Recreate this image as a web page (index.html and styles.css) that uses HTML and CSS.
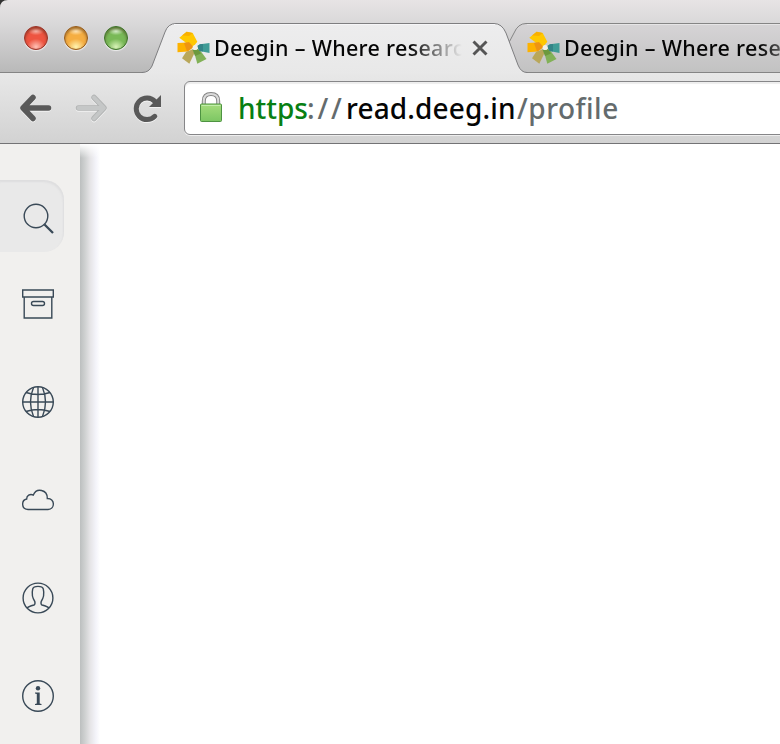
FILE: index.html
```html
<!DOCTYPE html>
<html lang="en">
<head>
<meta charset="utf-8">
<title>Deegin – Where research</title>
<link rel="stylesheet" href="styles.css">
</head>
<body>
<svg class="defs" width="0" height="0" aria-hidden="true">
  <defs>
    <symbol id="logo" viewBox="0 0 34 34">
      <path d="M2.300 6.700 9.700 .7 15.700 2 20.300 10.700 16.500 15.500 10.300 12.700Z" fill="#ffc800"/>
      <path d="M5 4.500 9.700 .7 15.700 2 12 5Z" fill="#f9b000"/>
      <path d="M.5 12 10 11.500 16.500 16 11 20.500 .5 21.300Z" fill="#fdb200"/>
      <path d="M7 12 12 11 16.500 16 10 20.500Z" fill="#ee9413"/>
      <path d="M9 21 15.700 18.200 17.500 22 12.300 32.700 5 27.300Z" fill="#b9a75a"/>
      <path d="M16.500 19 22.500 18.500 29.500 28 20.300 32.700Z" fill="#82b157"/>
      <path d="M15.500 18.500 21 18 24 22.500 18 25Z" fill="#6c993e"/>
      <path d="M20 15.300 23 13.300 32.500 12 32.500 22 22.500 20Z" fill="#3f9c96"/>
      <path d="M20 15.300 23 13.300 26 13 26 20.500 22.500 20Z" fill="#338487"/>
      <circle cx="18.200" cy="16.500" r="2.600" fill="#f1f0e8"/>
    </symbol>
  </defs>
</svg>
<header class="tabstrip">
  <svg class="tab-shapes" width="780" height="74" viewBox="0 0 780 74">
    <defs>
      <linearGradient id="active" x1="0" y1="0" x2="0" y2="1"><stop offset="0" stop-color="#ededee"/><stop offset="1" stop-color="#e8e8e8"/></linearGradient>
      <linearGradient id="idle" x1="0" y1="0" x2="0" y2="1"><stop offset="0" stop-color="#d6d4d6"/><stop offset="1" stop-color="#c2c2c2"/></linearGradient>
    </defs>
    <path d="M0 0H8Q0 0 0 8Z" fill="#333"/>
    <path d="M0 72.500H780" stroke="#858585"/>
    <path d="M505 50 514 33Q518 23.500 526 23.500H790V72.500H505Z" fill="url(#idle)" stroke="#858585"/>
    <path d="M527 24.500H780" stroke="#e6e5e6"/>
    <path d="M142 72.500Q149 72.500 152 66L165 32Q168 23.500 176 23.500H494Q502 23.500 506 33L518 65Q521 72.500 527 72.500V75H142Z" fill="url(#active)" stroke="#7e7e80"/>
    <path d="M143 73H527V74H143Z" fill="#e8e8e8"/>
    <path d="M174 24.500H495" stroke="#f6f6f8"/>
  </svg>
  <div class="lights"><i class="light red"></i><i class="light amber"></i><i class="light green"></i></div>
  <div class="tab first">
    <svg class="logo"><use href="#logo"/></svg>
    <span class="title">Deegin – Where research</span>
    <svg class="close" width="16" height="16" viewBox="0 0 16 16"><path d="M1.500 1.500 14.500 14.500M14.500 1.500 1.500 14.500" stroke="#555" stroke-width="2.900"/></svg>
  </div>
  <div class="tab second">
    <svg class="logo"><use href="#logo"/></svg>
    <span class="title">Deegin – Where research</span>
  </div>
</header>
<nav class="toolbar">
  <svg width="32" height="30" viewBox="0 0 32 30" fill="none" stroke="#595959" stroke-width="5.500" stroke-linecap="round" stroke-linejoin="round"><path d="M28.500 15H5M13 4.500 3 15 13 25.500"/></svg>
  <svg class="forward" width="32" height="30" viewBox="0 0 32 30" fill="none" stroke-linecap="round" stroke-linejoin="round"><path d="M3.500 15H27M19 4.500 29 15 19 25.500" stroke="#b2b4b4" stroke-width="5.500"/><path d="M3.500 15H27M19 4.500 29 15 19 25.500" stroke="#c5c7c7" stroke-width="3.800"/></svg>
  <svg class="reload" width="29" height="30" viewBox="0 0 29 30"><path d="M22 8.500A10.800 10.800 0 1 0 21.800 23.300" fill="none" stroke="#595959" stroke-width="5" stroke-linecap="round"/><path d="M28 2V14H16Z" fill="#595959"/></svg>
  <div class="omnibox">
    <svg class="lock" width="24" height="31" viewBox="0 0 24 31">
      <defs><linearGradient id="lockfill" x1="0" y1="0" x2="0" y2="1"><stop offset="0" stop-color="#a5dc7c"/><stop offset="1" stop-color="#7cc663"/></linearGradient></defs>
      <path d="M4.800 13V9Q4.800 2 12 2T19.200 9V13" fill="none" stroke="#858585" stroke-width="4"/>
      <path d="M4.800 13V9Q4.800 2 12 2T19.200 9V13" fill="none" stroke="#dadada" stroke-width="2"/>
      <rect x="1.500" y="12" width="21" height="17.500" rx="1" fill="url(#lockfill)" stroke="#4e9342"/>
      <path d="M2.500 13.500H21.500" stroke="#c1edaa"/>
    </svg>
    <div class="url"><span class="scheme">https</span><span class="sep">://</span><span class="host">read.deeg.in</span><span class="path">/profile</span></div>
  </div>
</nav>
<div class="page">
  <aside class="sidebar">
    <div class="item search"><svg width="34" height="34" viewBox="0 0 34 34"><circle cx="14" cy="14" r="11.800"/><path d="M22.500 22.500 31 31" stroke-width="2.300"/></svg></div>
    <div class="item archive"><svg width="34" height="34" viewBox="0 0 34 34"><path d="M1.700 3H32.300V10H1.700ZM3.200 10V31H30.800V10"/><rect x="10.500" y="14.500" width="13" height="4" rx="2"/></svg></div>
    <div class="item"><svg width="34" height="34" viewBox="0 0 34 34"><circle cx="17" cy="17" r="15.300"/><path d="M17 1.700V32.300M1.700 17H32.300M12.500 2.500Q6.500 17 12.500 31.500M21.500 2.500Q27.500 17 21.500 31.500M5 7.500Q17 11.500 29 7.500M5 26.500Q17 22.500 29 26.500"/></svg></div>
    <div class="item"><svg width="34" height="34" viewBox="0 0 34 34"><path d="M7 26.500C0 26 .2 17 5.700 16C5.500 12.500 9 10.500 12.300 12C15.500 4.300 26.500 6.500 26.300 15.500C34 15 34.500 26 27 26.500Z"/></svg></div>
    <div class="item"><svg width="34" height="34" viewBox="0 0 34 34"><circle cx="17" cy="17" r="14.900"/><path d="M6 27Q7 25.700 13 24Q14.500 23.300 13.800 20.500C10.800 16 11 11 11.700 8C12.500 4.500 21.500 4.500 22.300 8C23 11 23.200 16 20.200 20.500Q19.500 23.300 21 24Q27 25.700 28 27"/></svg></div>
    <div class="item"><svg width="34" height="34" viewBox="0 0 34 34"><circle cx="17" cy="17" r="15.300"/><circle class="solid" cx="17" cy="9.300" r="2.200"/><path class="solid" d="M14 13.500H18.700V24.500L20.500 25V26H14V25L15.800 24.500V15L14 14.500Z"/></svg></div>
  </aside>
  <main class="content"></main>
</div>
</body>
</html>
```

FILE: styles.css
```css
* { box-sizing: border-box; }
body { margin: 0; width: 780px; height: 744px; overflow: hidden; background: #fff; font-family: "Noto Sans", "Open Sans", sans-serif; }
svg { display: block; flex: none; }
.defs { position: absolute; }
.tabstrip { position: relative; display: flex; height: 73px; overflow: hidden; background: linear-gradient(#e7e4e5 0, #dad9da 22px, #b9b9b9 72px); }
.tab-shapes { position: absolute; left: 0; top: 0; }
.lights { position: relative; display: flex; gap: 16px; padding: 26px 0 0 24px; width: 177px; flex: none; }
.light { width: 24px; height: 24px; border-radius: 50%; border: 1.5px solid; box-shadow: 0 1px 1px #eee, inset 0 2px 3px rgba(50, 20, 0, .45); }
.red { border-color: #94352a; background: radial-gradient(ellipse 9px 8px at 50% 90%, #ffc1b5, transparent), radial-gradient(ellipse 8px 4px at 50% 19%, #f6b6a9, transparent), #ee5541; }
.amber { border-color: #925b20; background: radial-gradient(ellipse 9px 8px at 50% 90%, #fff4b0, transparent), radial-gradient(ellipse 8px 4px at 50% 19%, #ffe6b7, transparent), #f5ae42; }
.green { border-color: #3d702b; background: radial-gradient(ellipse 9px 8px at 50% 90%, #d8f3b8, transparent), radial-gradient(ellipse 8px 4px at 50% 19%, #d6edca, transparent), #79b957; }
.tab { position: relative; display: flex; align-items: center; flex: none; height: 50px; margin-top: 23px; color: #050505; }
.first { width: 350px; }
.second { width: 270px; }
.logo { width: 34px; height: 34px; }
.title { margin-left: 3px; width: 249px; overflow: hidden; white-space: nowrap; font-size: 21.5px; font-weight: 500; line-height: 30px; letter-spacing: .3px; -webkit-mask-image: linear-gradient(90deg, #000 195px, transparent 248px); mask-image: linear-gradient(90deg, #000 195px, transparent 248px); }
.close { margin-left: 9px; }
.toolbar { display: flex; align-items: center; height: 71px; padding-left: 20px; border-bottom: 1px solid #737375; background: linear-gradient(#e8e8e8, #d2d2d2); }
.toolbar > svg { margin-bottom: 1px; filter: drop-shadow(0 1px 0 #f2f2f2); }
.toolbar > .forward { margin-left: 23px; }
.toolbar > .reload { margin-left: 26px; }
.omnibox { display: flex; align-items: center; margin: 0 -8px 1px 22px; flex: 1; height: 54px; border: 1px solid #868688; border-radius: 6px; background: #fff; box-shadow: inset 0 2px 1px #eee, 0 1px 0 #eee; }
.lock { margin-left: 14px; }
.url { display: flex; margin-left: 15px; font-size: 28px; font-weight: 500; line-height: 40px; white-space: nowrap; }
.url span { flex: none; }
.scheme { width: 69px; color: #087f13; }
.sep { width: 39px; color: #646b6d; letter-spacing: 2.8px; }
.host { width: 171px; color: #050505; letter-spacing: .15px; }
.path { color: #646b6d; letter-spacing: .5px; }
.page { display: flex; height: 600px; }
.sidebar { width: 80px; flex: none; padding-top: 36px; background: #f1f0ee; }
.item { display: flex; align-items: center; height: 98px; padding-left: 21px; }
.item svg { fill: none; stroke: #394957; stroke-width: 1.4; }
.item .solid { fill: #394957; stroke: none; }
.item.search { width: 64px; height: 72px; background: #e9e9e9; border-radius: 0 20px 20px 0; box-shadow: inset -1px 2px 2px #dededf; padding: 5px 0 0 22px; }
.item.archive { height: 101px; }
.item.archive svg { margin-top: 2px; }
.content { flex: 1; background: linear-gradient(#fff, rgba(255, 255, 255, 0) 14px), linear-gradient(90deg, #bcbfbf 0, #cfd1d1 5px, #e5e4e6 10px, #f4f4fa 16px, #fff 20px); }
```
